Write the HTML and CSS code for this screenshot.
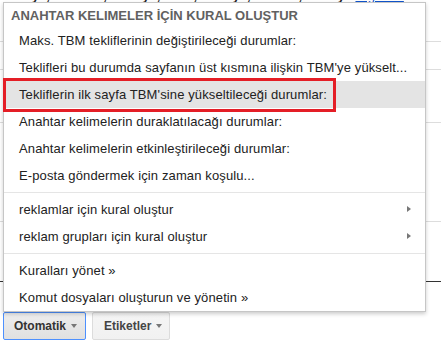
FILE: index.html
```html
<!DOCTYPE html>
<html lang="tr">
  <head>
    <meta charset="UTF-8" />
    <title>Otomatik kurallar</title>
    <link rel="stylesheet" href="styles.css">
  </head>
  <body>
    <div class="page">
      <div class="bg-table">
        <div class="bg-text">Türkiye, İstanbul, Türkiye, İzmir, Türkiye, Manisa, Türkiye <a href="#">Diğerleri</a></div>
        <div class="bg-row r1"></div>
        <div class="bg-row r2"></div>
        <div class="bg-row r3"></div>
        <div class="bg-row r4"></div>
        <div class="bg-row r5"></div>
      </div>

      <div class="menu">
        <div class="menu-header">ANAHTAR KELIMELER İÇİN KURAL OLUŞTUR</div>
        <div class="menu-item">Maks. TBM tekliflerinin değiştirileceği durumlar:</div>
        <div class="menu-item">Teklifleri bu durumda sayfanın üst kısmına ilişkin TBM'ye yükselt...</div>
        <div class="menu-item active">Tekliflerin ilk sayfa TBM'sine yükseltileceği durumlar:</div>
        <div class="menu-item">Anahtar kelimelerin duraklatılacağı durumlar:</div>
        <div class="menu-item">Anahtar kelimelerin etkinleştirileceği durumlar:</div>
        <div class="menu-item">E-posta göndermek için zaman koşulu...</div>
        <div class="menu-sep"></div>
        <div class="menu-item sub">reklamlar için kural oluştur <span class="arrow-right"></span></div>
        <div class="menu-item sub">reklam grupları için kural oluştur <span class="arrow-right"></span></div>
        <div class="menu-sep"></div>
        <div class="menu-item">Kuralları yönet »</div>
        <div class="menu-item">Komut dosyaları oluşturun ve yönetin »</div>
        <div class="highlight-box"></div>
      </div>

      <div class="toolbar">
        <button class="btn btn-auto focused">Otomatik <span class="arrow-down"></span></button>
        <button class="btn btn-labels">Etiketler <span class="arrow-down"></span></button>
      </div>
    </div>
  </body>
</html>
```

FILE: styles.css
```css
* {
  margin: 0;
  padding: 0;
  box-sizing: border-box;
}

body {
  font-family: "Liberation Sans", Arial, sans-serif;
  font-size: 13px;
  color: #222;
  background: #fff;
  width: 441px;
  height: 345px;
  overflow: hidden;
}

.page {
  position: relative;
  height: 345px;
}

/* table behind the popup */
.bg-table {
  height: 311px;
  overflow: hidden;
}

.bg-text {
  margin-top: -11px;
  height: 14px;
  line-height: 14px;
  font-weight: bold;
  color: #222;
  white-space: nowrap;
}

.bg-text a {
  color: #15c;
  font-weight: normal;
}

.bg-row {
  border-bottom: 1px solid #ddd;
}

.r1 { height: 39px; }
.r2 { height: 28px; }
.r3 { height: 53px; }
.r4 { height: 99px; }
.r5 { height: 60px; border-bottom-color: #333; }

/* popup menu */
.menu {
  position: absolute;
  top: 2px;
  left: 3px;
  width: 423px;
  background: #fff;
  border: 1px solid #c6c6c6;
  box-shadow: 0 2px 4px rgba(0, 0, 0, 0.2);
}

.menu-header {
  height: 24px;
  line-height: 26px;
  padding-left: 7px;
  font-weight: bold;
  color: #616161;
  white-space: nowrap;
}

.menu-item {
  position: relative;
  height: 27px;
  line-height: 27px;
  padding-left: 15px;
  letter-spacing: 0.12px;
  white-space: nowrap;
}

.menu-item.active {
  background: #e4e4e4;
}

.menu-sep {
  margin: 3px 0 3px;
  border-top: 1px solid #e5e5e5;
}

.arrow-right {
  position: absolute;
  right: 14px;
  top: 10px;
  width: 0;
  height: 0;
  border-top: 3.5px solid transparent;
  border-bottom: 3.5px solid transparent;
  border-left: 4px solid #777;
}

/* red annotation frame */
.highlight-box {
  position: absolute;
  left: -1px;
  top: 75px;
  width: 333px;
  height: 34px;
  border: 3px solid #e41e26;
}

/* toolbar */
.toolbar {
  display: flex;
  gap: 6px;
  padding-left: 3px;
  padding-top: 1px;
}

.btn {
  display: flex;
  align-items: center;
  height: 28px;
  padding: 0 0 0 10px;
  font-family: inherit;
  font-size: 12px;
  font-weight: bold;
  color: #444;
  background: linear-gradient(#f5f5f5, #f1f1f1);
  border: 1px solid #dcdcdc;
  border-radius: 2px;
}

.btn-auto {
  width: 83px;
}

.btn-labels {
  width: 78px;
  padding-left: 11px;
}

.btn.focused {
  background: linear-gradient(#eeeeee, #e0e0e0);
  border-color: #4d90fe;
  color: #333;
}

.arrow-down {
  margin-left: 5px;
  width: 0;
  height: 0;
  border-left: 3.5px solid transparent;
  border-right: 3.5px solid transparent;
  border-top: 4px solid #777;
}
```
